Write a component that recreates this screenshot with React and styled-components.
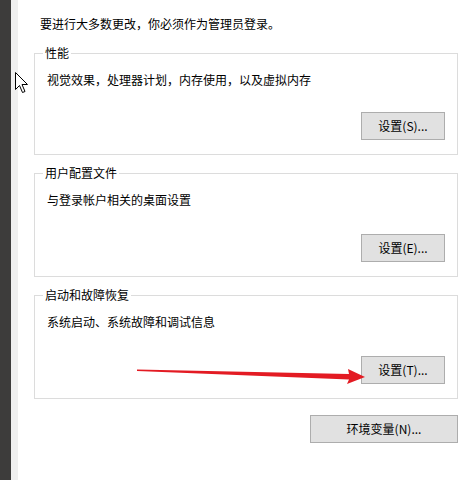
import styled, { createGlobalStyle } from "styled-components";

const GlobalStyle = createGlobalStyle`
  html, body {
    margin: 0;
    padding: 0;
    background: #ffffff;
  }
  body {
    font-family: "Noto Sans CJK SC", "Noto Sans", sans-serif;
    font-size: 12px;
    color: #000000;
  }
`;

const STWindow = styled.div`
  position: relative;
  display: flex;
  width: 473px;
  height: 480px;
  overflow: hidden;
  background: #ffffff;
`;

const STDarkEdge = styled.div`
  width: 11px;
  background: #3d3c3b;
`;

const STLightEdge = styled.div`
  width: 7px;
  background: #efefef;
`;

const STPanel = styled.div`
  flex: 1;
  display: flex;
  flex-direction: column;
  padding-top: 16px;
`;

const STNotice = styled.p`
  margin: 0 0 0 22px;
  line-height: 16px;
  font-size: 12px;
`;

const STGroup = styled.fieldset`
  margin: ${(p) => p.$gap}px 15px 0 16px;
  padding: 0 12px 14px 12px;
  border: 1px solid #dcdcdc;
  display: flex;
  flex-direction: column;
  min-width: 0;

  legend {
    margin-left: -4px;
    padding: 0 2px;
    line-height: 16px;
    font-size: 12px;
  }
`;

const STDescription = styled.div`
  margin-top: 11px;
  line-height: 16px;
  font-size: 12px;
`;

const STButtonRow = styled.div`
  display: flex;
  justify-content: flex-end;
  margin-top: ${(p) => p.$gap ?? 26}px;
  padding-right: ${(p) => p.$inset ?? 0}px;
`;

const STButton = styled.button`
  width: ${(p) => p.$width}px;
  height: 28px;
  padding: 0;
  background: #e1e1e1;
  border: 1px solid #adadad;
  font-family: inherit;
  font-size: 12px;
  color: #000000;
  line-height: 16px;
`;

const STOverlay = styled.svg`
  position: absolute;
  left: 0;
  top: 0;
  pointer-events: none;
`;

const groups = [
  { title: "性能", text: "视觉效果，处理器计划，内存使用，以及虚拟内存", key: "S", gap: 13, buttonGap: 24 },
  { title: "用户配置文件", text: "与登录帐户相关的桌面设置", key: "E", gap: 10, buttonGap: 26 },
  { title: "启动和故障恢复", text: "系统启动、系统故障和调试信息", key: "T", gap: 10, buttonGap: 26 },
];

export default function App() {
  return (
    <>
      <GlobalStyle />
      <STWindow>
        <STDarkEdge />
        <STLightEdge />
        <STPanel>
          <STNotice>要进行大多数更改，你必须作为管理员登录。</STNotice>
          {groups.map((g) => (
            <STGroup key={g.key} $gap={g.gap}>
              <legend>{g.title}</legend>
              <STDescription>{g.text}</STDescription>
              <STButtonRow $gap={g.buttonGap}>
                <STButton $width={84}>设置({g.key})...</STButton>
              </STButtonRow>
            </STGroup>
          ))}
          <STButtonRow $gap={16} $inset={15}>
            <STButton $width={148}>环境变量(N)...</STButton>
          </STButtonRow>
        </STPanel>

        <STOverlay width="473" height="480" viewBox="0 0 473 480">
          {/* red annotation arrow */}
          <polygon
            points="137,369.5 349,374 348,369 365,377 347,384 349,379.5 137,371"
            fill="#e31b23"
          />
          {/* mouse pointer */}
          <path
            d="M15.5 72.5 L15.5 89.5 L19.5 85.5 L22.5 92.5 L25 91.5 L22 84.5 L27.5 84.5 Z"
            fill="#ffffff"
            stroke="#000000"
            strokeWidth="1"
            strokeLinejoin="miter"
          />
        </STOverlay>
      </STWindow>
    </>
  );
}
